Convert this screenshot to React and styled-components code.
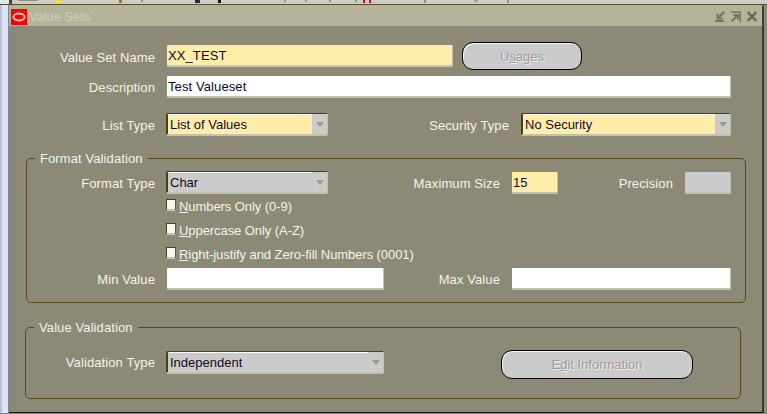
import React from "react";
import styled, { createGlobalStyle } from "styled-components";

const olive = "#8c8a76";

const GlobalStyle = createGlobalStyle`
    html, body {
        margin: 0;
        padding: 0;
        background: ${olive};
        overflow: hidden;
    }
    body {
        font-family: "Liberation Sans", Arial, sans-serif;
    }
`;

const Screen = styled.div`
    width: 767px;
    height: 414px;
    display: flex;
    flex-direction: column;
    overflow: hidden;
    background: ${olive};
`;

const TopStrip = styled.div`
    height: 4px;
    flex: none;
    background: #cccccb;
    border-bottom: 1px solid #5a4f22;
    display: flex;
`;

const TopSpeck = styled.span`
    width: ${(p) => p.$w}px;
    height: ${(p) => p.$h}px;
    flex: none;
    margin-left: ${(p) => p.$ml}px;
    background: ${(p) => p.$color};
`;

const Middle = styled.div`
    display: flex;
    height: 408px;
    flex: none;
`;

const LeftStrip = styled.div`
    width: 9px;
    flex: none;
    background: linear-gradient(to right, #b9c2d2 0, #b9c2d2 2px, #dde6f6 2px, #dde6f6 8px, #7f8494 8px);
`;

const Window = styled.div`
    width: 755px;
    flex: none;
    box-sizing: border-box;
    background: ${olive};
    border-right: 2px solid #3a3a36;
    border-bottom: 1px solid #111;
    border-top-right-radius: 3px;
    display: flex;
    flex-direction: column;
`;

const TitleBar = styled.div`
    height: 21px;
    flex: none;
    background: #b5b39a;
    display: flex;
    align-items: center;
    padding: 0 5px 0 2px;
`;

const Logo = styled.svg`
    width: 16px;
    height: 16px;
    flex: none;
    margin-top: 3px;
`;

const Title = styled.span`
    margin: 2px 0 0 2px;
    font-size: 13px;
    letter-spacing: -0.1px;
    color: #cfcebd;
    flex: 1;
`;

const TitleIcons = styled.div`
    display: flex;
    align-items: center;
    gap: 6px;
    margin-top: 1px;
`;

const Body = styled.div`
    flex: 1;
    display: flex;
    flex-direction: column;
    padding-top: 16px;
`;

const Row = styled.div`
    display: flex;
    align-items: ${(p) => p.$align || "center"};
    height: ${(p) => p.$h}px;
    margin-top: ${(p) => p.$mt || 0}px;
`;

const Label = styled.label`
    width: ${(p) => p.$w}px;
    flex: none;
    text-align: right;
    font-size: 13px;
    letter-spacing: 0.1px;
    line-height: ${(p) => p.$lh || 22}px;
    margin-top: ${(p) => p.$mt ?? 2}px;
    color: #f3f3ea;
`;

const Field = styled.div`
    width: ${(p) => p.$w}px;
    height: 22px;
    flex: none;
    box-sizing: border-box;
    margin-left: ${(p) => p.$ml || 12}px;
    background: ${(p) => p.$bg};
    border-right: 1px solid #c4c2ae;
    border-bottom: 2px solid #c4c2ae;
    border-radius: 1px;
    padding: 1px 0 0 1px;
    font-size: 13px;
    line-height: 19px;
    letter-spacing: 0.1px;
    color: #12082c;
`;

const Select = styled.div`
    width: ${(p) => p.$w}px;
    height: 23px;
    flex: none;
    box-sizing: border-box;
    margin-left: ${(p) => p.$ml || 11}px;
    margin-top: ${(p) => p.$mt || 0}px;
    background: ${(p) => p.$bg};
    border: 1px solid #4a3f14;
    border-right-color: #c4c2ae;
    border-bottom: 2px solid #c4c2ae;
    border-radius: 2px;
    box-shadow: inset 1px 0 0 #4a3f14, inset 0 1px 0 #fff;
    display: flex;
    align-items: center;
    justify-content: space-between;
    padding-left: 3px;
    font-size: 13px;
    color: #12082c;
`;

const SelectText = styled.span`
    margin-top: 1px;
`;

const Arrow = styled.span`
    width: 15px;
    align-self: stretch;
    display: flex;
    align-items: center;
    justify-content: center;
    background: #cbcbc8;

    &::after {
        content: "";
        border-left: 4px solid transparent;
        border-right: 4px solid transparent;
        border-top: 5px solid #9a9a96;
    }
`;

const PillButton = styled.div`
    width: ${(p) => p.$w}px;
    height: ${(p) => p.$h}px;
    flex: none;
    box-sizing: border-box;
    margin-left: ${(p) => p.$ml}px;
    background: #cbcbcb;
    border: 1px solid #000;
    border-radius: 11px;
    box-shadow: inset 1px 1px 0 #f4f4f4;
    display: flex;
    align-items: center;
    justify-content: center;
    font-size: 13px;
    color: #9b9b98;
    text-shadow: 1px 1px 0 #efefef;
`;

const Group = styled.fieldset`
    margin: ${(p) => p.$mt}px 0 0 ${(p) => p.$ml}px;
    padding: 0 0 ${(p) => p.$pb}px 0;
    width: ${(p) => p.$w}px;
    box-sizing: border-box;
    border: 1px solid #54481c;
    border-radius: 5px;
    min-width: 0;
`;

const Legend = styled.legend`
    margin-left: 8px;
    padding: 0 5px;
    height: 14px;
    line-height: 16px;
    font-size: 13px;
    letter-spacing: 0.1px;
    color: #f3f3ea;
`;

const CheckRow = styled.div`
    display: flex;
    align-items: center;
    box-sizing: border-box;
    height: 24px;
    padding: 0 0 0 139px;
    font-size: 13px;
    letter-spacing: -0.07px;
    color: #f3f3ea;
`;

const CheckBox = styled.span`
    width: 8px;
    height: 9px;
    flex: none;
    margin: -2px 3px 0 0;
    background: #f6f6f2;
    border-top: 1px solid #4a3f14;
    border-left: 1px solid #4a3f14;
    border-right: 1px solid #55533f;
    border-bottom: 2px solid #c4c2ae;
`;

// bits of the window behind that show above this one: [x, width, height, colour]
const specks = [
    [0, 9, 4, "#dde6f6"],
    [9, 3, 4, "#4a4632"],
    [18, 20, 1, "#8f8f88"],
    [56, 5, 3, "#f3e24a"],
    [119, 3, 3, "#a0701e"],
    [141, 2, 2, "#8f8f8f"],
    [195, 5, 3, "#2a2a4a"],
    [218, 3, 3, "#111111"],
    [284, 2, 2, "#8f8f8f"],
    [305, 2, 2, "#9a9a9a"],
    [329, 2, 2, "#8f8f8f"],
    [355, 2, 2, "#8f8f8f"],
    [363, 2, 3, "#c81010"],
    [369, 2, 3, "#c81010"],
    [424, 2, 3, "#8f8f8f"],
    [474, 4, 2, "#9a9a9a"],
    [507, 2, 3, "#8f8f8f"],
];

function Minimize() {
    return (
        <svg width="10" height="11" viewBox="0 0 10 11">
            <path d="M9.5 0.5 L3.5 6.5 M2.5 2.5 V7.5 H7.5" fill="none" stroke="#77755f" strokeWidth="2" />
            <path d="M0 10 H9" stroke="#77755f" strokeWidth="2" />
        </svg>
    );
}

function Maximize() {
    return (
        <svg width="10" height="11" viewBox="0 0 10 11">
            <path d="M0 1 H9.2 V11" fill="none" stroke="#77755f" strokeWidth="1.6" />
            <path d="M0.5 10.5 L5.5 5.5 M2.5 4 H7 V8.5" fill="none" stroke="#77755f" strokeWidth="2" />
        </svg>
    );
}

function Close() {
    return (
        <svg width="10" height="11" viewBox="0 0 10 11">
            <path d="M0.8 1 L9.2 10 M9.2 1 L0.8 10" stroke="#6a6854" strokeWidth="2.4" />
        </svg>
    );
}

export default function App() {
    return (
        <Screen>
            <GlobalStyle />
            <TopStrip>
                {specks.map(([x, w, h, color], i) => {
                    const prev = specks[i - 1];
                    return (
                        <TopSpeck
                            key={x}
                            $ml={prev ? x - prev[0] - prev[1] : 0}
                            $w={w}
                            $h={h}
                            $color={color}
                        />
                    );
                })}
            </TopStrip>
            <Middle>
                <LeftStrip />
                <Window>
                    <TitleBar>
                        <Logo viewBox="0 0 16 16">
                            <rect width="16" height="16" fill="#ff0000" />
                            <ellipse cx="8" cy="8" rx="5.6" ry="3.4" fill="none" stroke="#ffc8c8" strokeWidth="2" />
                        </Logo>
                        <Title>Value Sets</Title>
                        <TitleIcons>
                            <Minimize />
                            <Maximize />
                            <Close />
                        </TitleIcons>
                    </TitleBar>
                    <Body>
                        <Row $h={28}>
                            <Label $w={146} $mt={4}>Value Set Name</Label>
                            <Field $w={286} $bg="#ffeeaa">XX_TEST</Field>
                            <PillButton $w={120} $h={28} $ml={9}>U<u>s</u>ages</PillButton>
                        </Row>
                        <Row $h={22} $mt={6}>
                            <Label $w={146}>Description</Label>
                            <Field $w={564} $bg="#ffffff">Test Valueset</Field>
                        </Row>
                        <Row $h={23} $mt={15}>
                            <Label $w={146}>List Type</Label>
                            <Select $w={162} $bg="#ffeeaa"><SelectText>List of Values</SelectText><Arrow /></Select>
                            <Label $w={181}>Security Type</Label>
                            <Select $w={210} $ml={12} $bg="#ffeeaa"><SelectText>No Security</SelectText><Arrow /></Select>
                        </Row>
                        <Group $mt={15} $ml={17} $w={720} $pb={12}>
                            <Legend>Format Validation</Legend>
                            <Row $h={23} $mt={6}>
                                <Label $w={128}>Format Type</Label>
                                <Select $w={162} $bg="#cbcbcb"><SelectText>Char</SelectText><Arrow /></Select>
                                <Label $w={172}>Maximum Size</Label>
                                <Field $w={46} $bg="#ffeeaa">15</Field>
                                <Label $w={115}>Precision</Label>
                                <Field $w={46} $bg="#cbcbcb" />
                            </Row>
                            <CheckRow><CheckBox /><span><u>N</u>umbers Only (0-9)</span></CheckRow>
                            <CheckRow><CheckBox /><span><u>U</u>ppercase Only (A-Z)</span></CheckRow>
                            <CheckRow><CheckBox /><span><u>R</u>ight-justify and Zero-fill Numbers (0001)</span></CheckRow>
                            <Row $h={22} $mt={2}>
                                <Label $w={128}>Min Value</Label>
                                <Field $w={217} $bg="#ffffff" />
                                <Label $w={116}>Max Value</Label>
                                <Field $w={219} $bg="#ffffff" />
                            </Row>
                        </Group>
                        <Group $mt={17} $ml={16} $w={716} $pb={19}>
                            <Legend>Value Validation</Legend>
                            <Row $h={29} $mt={16} $align="flex-start">
                                <Label $w={129} $lh={25} $mt={0}>Validation Type</Label>
                                <Select $w={218} $mt={1} $bg="#cbcbcb"><SelectText>Independent</SelectText><Arrow /></Select>
                                <PillButton $w={192} $h={29} $ml={117}>E<u>d</u>it Information</PillButton>
                            </Row>
                        </Group>
                    </Body>
                </Window>
            </Middle>
        </Screen>
    );
}
